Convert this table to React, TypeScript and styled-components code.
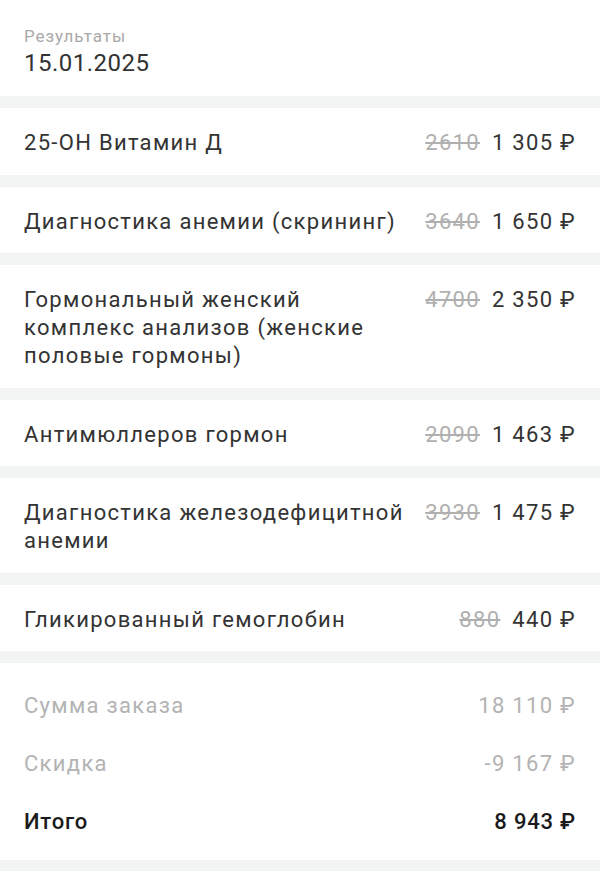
import React from 'react';
import styled, { createGlobalStyle } from 'styled-components';

const GlobalStyle = createGlobalStyle`
  html, body {
    margin: 0;
    padding: 0;
    background: #f3f5f5;
  }
  body {
    font-family: Roboto, 'Noto Sans', sans-serif;
    -webkit-font-smoothing: antialiased;
  }
`;

const Page = styled.div`
  display: flex;
  flex-direction: column;
  gap: 12px;
  padding-bottom: 12px;
`;

const Header = styled.header`
  background: #ffffff;
  padding: 26px 24px 18px;
  display: flex;
  flex-direction: column;
  gap: 2px;
`;

const Caption = styled.div`
  font-size: 17px;
  line-height: 20px;
  color: #a9a9a9;
  letter-spacing: 0.9px;
`;

const DateText = styled.div`
  font-size: 24px;
  line-height: 30px;
  color: #333333;
  letter-spacing: 0.5px;
`;

const Card = styled.div`
  background: #ffffff;
  padding: 21px 24px 17.5px;
  display: flex;
  align-items: flex-start;
  gap: 10px;
`;

const Name = styled.div`
  flex: 1;
  font-size: 22px;
  line-height: 28px;
  color: #333333;
  letter-spacing: 1.3px;
`;

const Prices = styled.div`
  display: flex;
  align-items: baseline;
  gap: 12px;
  white-space: nowrap;
  font-size: 22px;
  line-height: 28px;
  letter-spacing: 1.3px;
`;

const OldPrice = styled.span`
  color: #b0b0b0;
  text-decoration: line-through;
  text-decoration-thickness: 1.5px;
`;

const NewPrice = styled.span`
  color: #333333;
`;

const Summary = styled.div`
  background: #ffffff;
  padding: 29px 24px 24px;
  display: flex;
  flex-direction: column;
  gap: 30px;
`;

const SummaryRow = styled.div<{ $strong?: boolean }>`
  display: flex;
  justify-content: space-between;
  font-size: 22px;
  line-height: 28px;
  letter-spacing: ${p => (p.$strong ? '0.8px' : '1.3px')};
  color: ${p => (p.$strong ? '#1a1a1a' : '#b3b3b3')};
  font-weight: ${p => (p.$strong ? 500 : 400)};
`;

const items = [
  { name: '25-ОН Витамин Д', old: '2610', price: '1 305 ₽' },
  { name: 'Диагностика анемии (скрининг)', old: '3640', price: '1 650 ₽' },
  { name: 'Гормональный женский комплекс анализов (женские половые гормоны)', old: '4700', price: '2 350 ₽' },
  { name: 'Антимюллеров гормон', old: '2090', price: '1 463 ₽' },
  { name: 'Диагностика железодефицитной анемии', old: '3930', price: '1 475 ₽' },
  { name: 'Гликированный гемоглобин', old: '880', price: '440 ₽' }
];

export default function App() {
  return (
    <>
      <GlobalStyle />
      <Page>
        <Header>
          <Caption>Результаты</Caption>
          <DateText>15.01.2025</DateText>
        </Header>

        {items.map(item => (
          <Card key={item.name}>
            <Name>{item.name}</Name>
            <Prices>
              <OldPrice>{item.old}</OldPrice>
              <NewPrice>{item.price}</NewPrice>
            </Prices>
          </Card>
        ))}

        <Summary>
          <SummaryRow>
            <span>Сумма заказа</span>
            <span>18 110 ₽</span>
          </SummaryRow>
          <SummaryRow>
            <span>Скидка</span>
            <span>-9 167 ₽</span>
          </SummaryRow>
          <SummaryRow $strong>
            <span>Итого</span>
            <span>8 943 ₽</span>
          </SummaryRow>
        </Summary>
      </Page>
    </>
  );
}
